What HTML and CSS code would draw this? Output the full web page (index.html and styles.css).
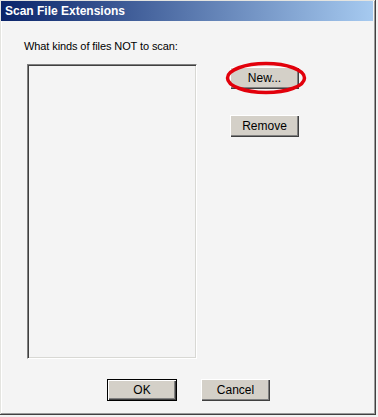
FILE: index.html
```html
<!doctype html>
<html lang="en">
  <head>
    <meta charset="UTF-8" />
    <title>Scan File Extensions</title>
    <link rel="stylesheet" href="styles.css">
  </head>
  <body>
    <div class="window">
      <div class="titlebar">Scan File Extensions</div>
      <div class="client">
        <div class="label">What kinds of files NOT to scan:</div>
        <div class="main">
          <div class="listbox"></div>
          <div class="side">
            <div class="new-wrap">
              <button class="btn">New...</button>
              <svg class="mark" width="82" height="34" viewBox="0 0 82 34">
                <ellipse cx="41" cy="17" rx="38.5" ry="14.5" fill="none" stroke="#e2000b" stroke-width="3.5" />
              </svg>
            </div>
            <button class="btn remove">Remove</button>
          </div>
        </div>
        <div class="footer">
          <button class="btn default">OK</button>
          <button class="btn cancel">Cancel</button>
        </div>
      </div>
    </div>
  </body>
</html>
```

FILE: styles.css
```css
* {
  margin: 0;
  padding: 0;
  box-sizing: border-box;
}
body {
  width: 378px;
  height: 417px;
  background-color: #f2f2f2;
  font-family: "Liberation Sans", Arial, sans-serif;
  font-size: 11px;
  color: #000;
  overflow: hidden;
}
.window {
  width: 376px;
  height: 415px;
  padding: 1px 2px 2px 1px;
  background-color: #f4f4f4;
  border-right: 1px solid #404040;
  border-bottom: 1px solid #404040;
  box-shadow:
    inset 1px 1px 0 #e4e4e0,
    inset -1px -1px 0 #9a9a9a,
    inset 2px 2px 0 #ffffff;
  display: flex;
  flex-direction: column;
}
.titlebar {
  height: 20px;
  padding-left: 4px;
  line-height: 20px;
  font-weight: bold;
  font-size: 12px;
  color: #fff;
  background: linear-gradient(to right, #0a246a, #a6caf0);
}
.client {
  flex: 1;
  padding-left: 23px;
  display: flex;
  flex-direction: column;
}
.label {
  margin-top: 19px;
  line-height: 13px;
  letter-spacing: -0.1px;
}
.main {
  display: flex;
  margin-top: 11px;
}
.listbox {
  width: 170px;
  height: 295px;
  margin-left: 3px;
  background-color: #f4f4f4;
  border-top: 1px solid #808080;
  border-left: 1px solid #808080;
  border-right: 1px solid #ffffff;
  border-bottom: 1px solid #ffffff;
  box-shadow:
    inset 1px 1px 0 #404040,
    inset -1px -1px 0 #d8d8d4;
}
.side {
  display: flex;
  flex-direction: column;
  margin-left: 33px;
  padding-top: 3px;
}
.new-wrap {
  position: relative;
}
.mark {
  position: absolute;
  left: -5px;
  top: -6px;
  pointer-events: none;
}
.btn {
  display: block;
  width: 69px;
  height: 22px;
  font-family: "Liberation Sans", Arial, sans-serif;
  font-size: 12px;
  color: #000;
  background-color: #d4d0c8;
  border: none;
  box-shadow:
    inset 1px 1px 0 #ffffff,
    inset -1px -1px 0 #404040,
    inset -2px -2px 0 #808080;
}
.remove {
  margin-top: 26px;
}
.footer {
  display: flex;
  margin-top: 20px;
  padding-left: 83px;
}
.default {
  width: 70px;
  border: 1px solid #000;
}
.cancel {
  margin-left: 24px;
}
```
